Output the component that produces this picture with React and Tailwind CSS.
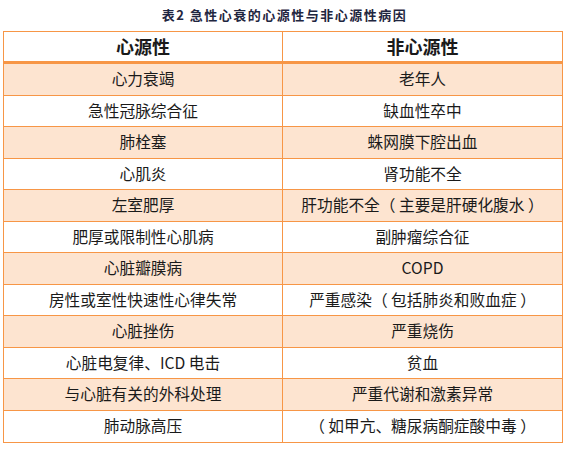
const rows = [
  ["心力衰竭", "老年人"],
  ["急性冠脉综合征", "缺血性卒中"],
  ["肺栓塞", "蛛网膜下腔出血"],
  ["心肌炎", "肾功能不全"],
  ["左室肥厚", "肝功能不全（ 主要是肝硬化腹水 ）"],
  ["肥厚或限制性心肌病", "副肿瘤综合征"],
  ["心脏瓣膜病", "COPD"],
  ["房性或室性快速性心律失常", "严重感染（ 包括肺炎和败血症 ）"],
  ["心脏挫伤", "严重烧伤"],
  ["心脏电复律、ICD 电击", "贫血"],
  ["与心脏有关的外科处理", "严重代谢和激素异常"],
  ["肺动脉高压", "（ 如甲亢、糖尿病酮症酸中毒 ）"],
];

export default function App() {
  return (
    <div className="w-[569px] h-[452px] bg-white text-[#1a1a1a] font-['Noto_Sans_CJK_SC',sans-serif]">
      {/* Title */}
      <div className="h-[31px] flex items-center justify-center pb-[2px]">
        <span className="text-[13px] font-bold tracking-[1.5px] text-[#1f2640]">
          表2 急性心衰的心源性与非心源性病因
        </span>
      </div>

      {/* Table */}
      <div className="ml-[3px] w-[560px] border border-[#f79646]">
        <div className="grid grid-cols-2 h-[32px] border-b-[3px] border-[#f79646] text-[18px] font-bold">
          <div className="flex items-center justify-center border-r border-[#f79646]">心源性</div>
          <div className="flex items-center justify-center">非心源性</div>
        </div>
        {rows.map(([a, b], i) => (
          <div
            key={i}
            className={
              "grid grid-cols-2 h-[31.5px] text-[15.7px] " +
              (i < rows.length - 1 ? "border-b border-[#f79646] " : "") +
              (i % 2 === 0 ? "bg-[#fde4d0]" : "bg-white")
            }
          >
            <div className="flex items-center justify-center border-r border-[#f79646]">{a}</div>
            <div className="flex items-center justify-center whitespace-pre">{b}</div>
          </div>
        ))}
      </div>
    </div>
  );
}
